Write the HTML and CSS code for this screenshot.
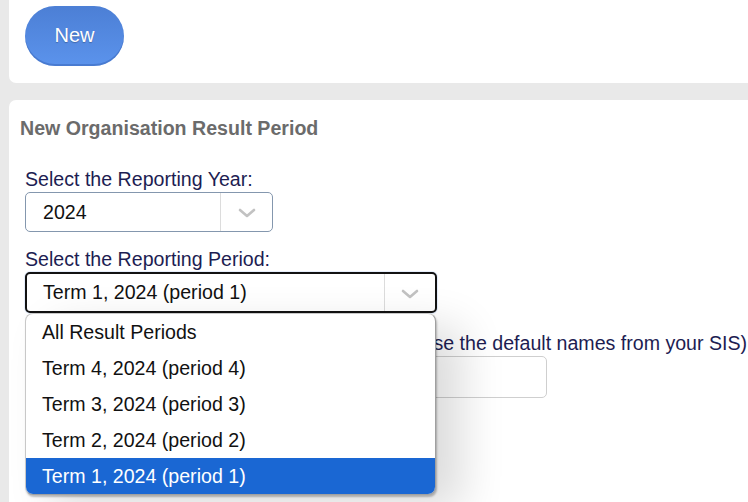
FILE: index.html
```html
<!DOCTYPE html>
<html>
<head>
<meta charset="utf-8">
<link rel="stylesheet" href="styles.css">
</head>
<body>
<div class="page">
  <div class="card top-card">
    <button class="btn-new">New</button>
  </div>
  <div class="card form-card">
    <h2 class="title">New Organisation Result Period</h2>
    <div class="group group-year">
      <label class="lbl">Select the Reporting Year:</label>
      <div class="select select-year">
        <span class="value">2024</span>
        <span class="arrow">
          <svg width="18" height="10" viewBox="0 0 18 10"><polyline points="2,2 9,8 16,2" fill="none" stroke="#c2c2c2" stroke-width="2.6" stroke-linecap="round" stroke-linejoin="round"/></svg>
        </span>
      </div>
    </div>
    <div class="group group-period">
      <label class="lbl">Select the Reporting Period:</label>
      <div class="select-wrap">
        <div class="select select-period">
          <span class="value">Term 1, 2024 (period 1)</span>
          <span class="arrow">
            <svg width="18" height="10" viewBox="0 0 18 10"><polyline points="2,2 9,8 16,2" fill="none" stroke="#c2c2c2" stroke-width="2.6" stroke-linecap="round" stroke-linejoin="round"/></svg>
          </span>
        </div>
        <ul class="menu">
          <li>All Result Periods</li>
          <li>Term 4, 2024 (period 4)</li>
          <li>Term 3, 2024 (period 3)</li>
          <li>Term 2, 2024 (period 2)</li>
          <li class="selected">Term 1, 2024 (period 1)</li>
        </ul>
      </div>
    </div>
    <div class="group group-name">
      <label class="lbl nowrap">Enter a name for every period (leave blank to use the default names from your SIS):</label>
      <input class="text-input" type="text">
    </div>
  </div>
</div>
</body>
</html>
```
FILE: styles.css
```css
html, body {
  margin: 0;
  padding: 0;
  background: #e9e9e9;
  overflow: hidden;
  width: 748px;
  height: 502px;
  font-family: "Liberation Sans", Arial, sans-serif;
}
.page {
  padding-left: 9px;
  width: 1100px;
}
.card {
  background: #fff;
}
.top-card {
  height: 83px;
  border-radius: 0 0 0 7px;
  padding: 6px 0 0 16px;
  box-sizing: border-box;
}
.btn-new {
  width: 99px;
  height: 60px;
  border: none;
  border-radius: 30px;
  background: linear-gradient(#4c7fd5, #5b93ec);
  box-shadow: inset 0 -2px 0 rgba(40, 80, 160, 0.35);
  color: #fff;
  font-family: "Liberation Sans", Arial, sans-serif;
  font-size: 20px;
  padding: 0 0 2px 0;
  text-shadow: 0 1px 1px rgba(0, 0, 0, 0.25);
}
.form-card {
  margin-top: 17px;
  border-radius: 7px 0 0 0;
  padding: 17px 0 60px 11px;
  height: 400px;
}
.title {
  margin: 0;
  font-size: 19.6px;
  line-height: 23px;
  font-weight: bold;
  color: #6b6b6b;
}
.group {
  padding-left: 5px;
}
.group-year {
  margin-top: 28px;
}
.group-period {
  margin-top: 16px;
}
.group-name {
  margin-top: 19px;
}
.lbl {
  display: block;
  font-size: 19.6px;
  line-height: 23px;
  color: #1d1d52;
  margin-bottom: 1px;
}
.nowrap {
  white-space: nowrap;
}
.select {
  display: flex;
  align-items: stretch;
  box-sizing: border-box;
  background: #fff;
  font-size: 19.6px;
  color: #111;
}
.select .value {
  flex: 1;
  display: flex;
  align-items: center;
}
.select .arrow {
  display: flex;
  align-items: center;
  justify-content: center;
  border-left: 1px solid #dcdcdc;
}
.select-year {
  width: 248px;
  height: 40px;
  border: 1px solid #8497ae;
  border-radius: 5px;
}
.select-year .value {
  padding-left: 17px;
}
.select-year .arrow {
  width: 51px;
  padding-top: 2px;
}
.select-wrap {
  position: relative;
}
.select-period {
  width: 412px;
  height: 41px;
  border: 2px solid #121212;
  border-radius: 5px;
  box-shadow: 0 0 0 1px #e6eefb;
}
.select-period .value {
  padding-left: 16px;
}
.select-period .arrow {
  width: 50px;
  padding-top: 2px;
}
.menu {
  position: absolute;
  left: 0;
  top: 41px;
  width: 411px;
  margin: 0;
  padding: 0;
  list-style: none;
  background: #fff;
  border: 1px solid #c8c8c8;
  border-right-color: #a0a0a0;
  border-bottom-color: #a0a0a0;
  border-radius: 8px;
  box-sizing: border-box;
  overflow: hidden;
  box-shadow: 1px 2px 2px rgba(0, 0, 0, 0.25), 26px 14px 44px rgba(0, 0, 0, 0.14);
  z-index: 5;
}
.menu li {
  height: 36px;
  line-height: 36px;
  padding-left: 16px;
  font-size: 19.6px;
  color: #111;
}
.menu li.selected {
  background: #1a67d3;
  color: #fff;
}
.text-input {
  display: block;
  width: 522px;
  height: 42px;
  box-sizing: border-box;
  border: 1px solid #cfcfcf;
  border-radius: 5px;
  background: #fff;
}
```
